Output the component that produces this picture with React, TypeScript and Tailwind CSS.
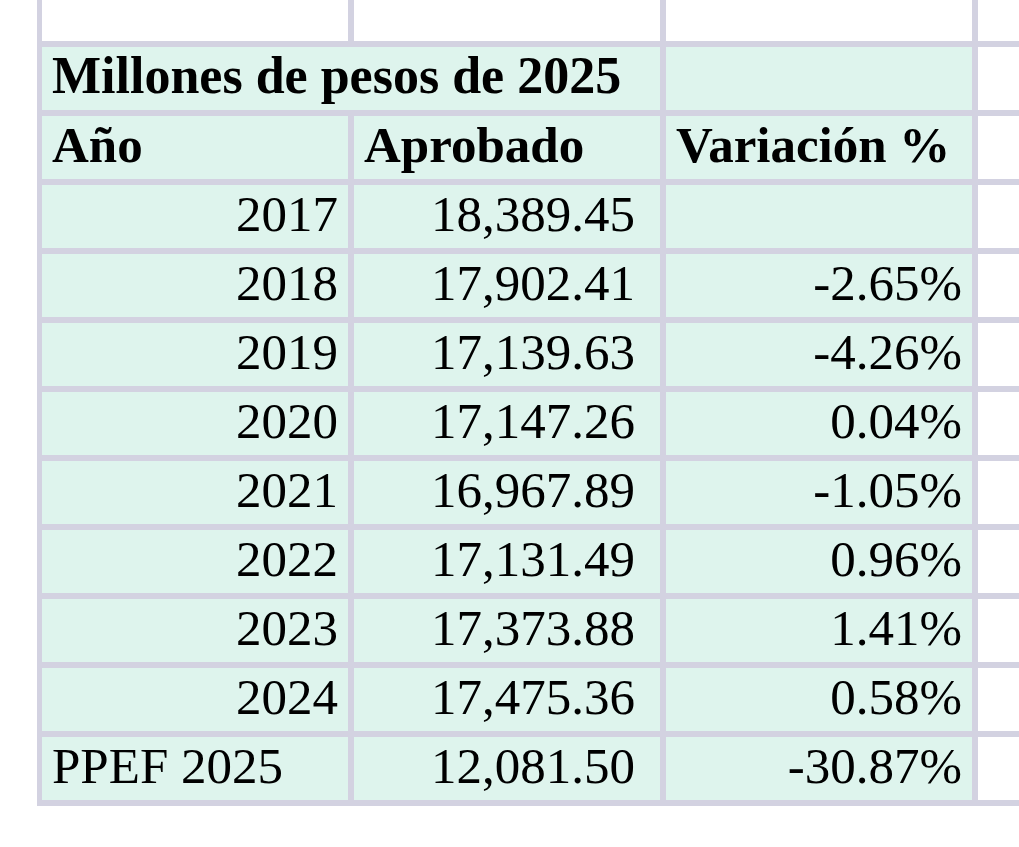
import React from 'react';

type Row = { year: string; approved: string; change: string };

const rows: Row[] = [
  { year: '2017', approved: '18,389.45', change: '' },
  { year: '2018', approved: '17,902.41', change: '-2.65%' },
  { year: '2019', approved: '17,139.63', change: '-4.26%' },
  { year: '2020', approved: '17,147.26', change: '0.04%' },
  { year: '2021', approved: '16,967.89', change: '-1.05%' },
  { year: '2022', approved: '17,131.49', change: '0.96%' },
  { year: '2023', approved: '17,373.88', change: '1.41%' },
  { year: '2024', approved: '17,475.36', change: '0.58%' },
];

const cell = 'flex items-center bg-[#def4ed] leading-none pb-[5px]';
const blank = 'bg-white';

const App: React.FC = () => (
  <div className="min-h-[847px] bg-white pl-[37px] text-black" style={{ fontFamily: '"Liberation Serif", "Times New Roman", serif' }}>
    <div className="grid w-[982px] grid-cols-[306px_306px_306px_1fr] grid-rows-[41px_repeat(11,63px)] gap-[6px] bg-[#d3d2e1] pl-[5px] pb-[6px] text-[51px]">
      {/* blank spreadsheet row on top */}
      <div className={blank}></div>
      <div className={blank}></div>
      <div className={blank}></div>
      <div className={blank}></div>

      <div className={`${cell} col-span-2 pl-[10px] text-[52px] font-bold`}>Millones de pesos de 2025</div>
      <div className={cell}></div>
      <div className={blank}></div>

      <div className={`${cell} pl-[10px] font-bold`}>Año</div>
      <div className={`${cell} pl-[10px] font-bold`}>Aprobado</div>
      <div className={`${cell} pl-[10px] font-bold`}>Variación %</div>
      <div className={blank}></div>

      {rows.map((r) => (
        <React.Fragment key={r.year}>
          <div className={`${cell} justify-end pr-[10px]`}>{r.year}</div>
          <div className={`${cell} justify-end pr-[25px]`}>{r.approved}</div>
          <div className={`${cell} justify-end pr-[10px]`}>{r.change}</div>
          <div className={blank}></div>
        </React.Fragment>
      ))}

      <div className={`${cell} pl-[10px]`}>PPEF 2025</div>
      <div className={`${cell} justify-end pr-[25px]`}>12,081.50</div>
      <div className={`${cell} justify-end pr-[10px]`}>-30.87%</div>
      <div className={blank}></div>
    </div>
  </div>
);

export default App;
